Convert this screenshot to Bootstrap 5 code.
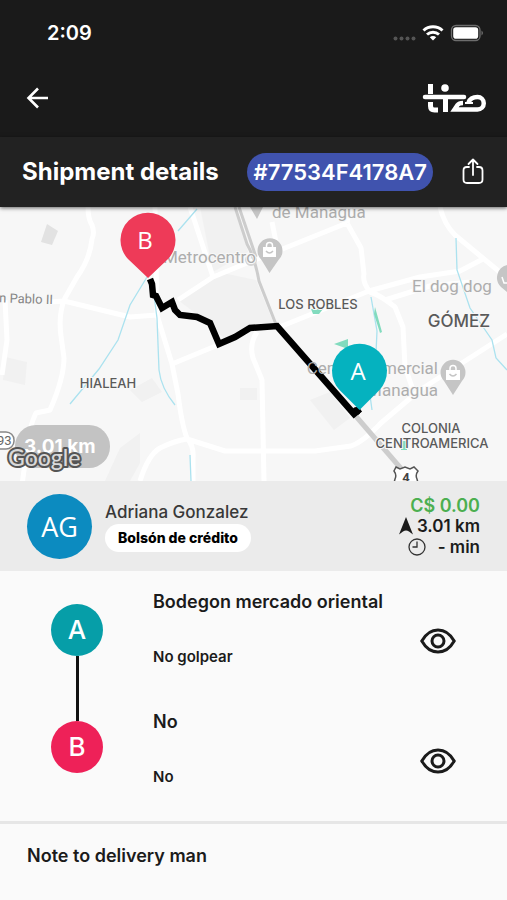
<!DOCTYPE html>
<html lang="en">
<head>
<meta charset="utf-8">
<meta name="viewport" content="width=device-width, initial-scale=1">
<title>Shipment details</title>
<link href="https://cdn.jsdelivr.net/npm/bootstrap@5.3.0/dist/css/bootstrap.min.css" rel="stylesheet">
<style>
body{font-family:Inter,"Liberation Sans",sans-serif;background:#fafafa;color:#1b1b1b}
svg{display:block}
.top-area{background:#1a1a1a;color:#fff;padding:0 20px 0 26px}
.status-row{height:66px;padding:0 3px 0 21px}
.clock{font-size:20px;line-height:24px}
.nav-row{height:71px;padding-bottom:7px}
.title-row{background:#222;color:#fff;height:70px;padding:0 20px 0 22px;position:relative;z-index:1;box-shadow:0 1px 4px rgba(0,0,0,.6)}
.title-row h1{font-size:24px;line-height:28px}
.code-pill{background:#4053ae;font-size:22px;line-height:24px;padding:7px 6px;margin-right:26px}
.map-area svg{width:100%;height:274px}
.map-area{background:#f7f7f7}
.client{background:#ebebeb;height:90px;padding:0 27px}
.client-text{margin-left:13px}
.avatar{width:65px;height:65px;background:#0c8bc0;color:#fff;font:400 27px/65px "Open Sans",sans-serif}
.client-name{font-size:17px;line-height:24px;color:#383838}
.credit{font-size:14px;line-height:16px;padding:6px 13px;color:#000;font-weight:800}
.figures{font-size:17px;line-height:21px}
.money{color:#4caf50;font-size:18px}
.stops{padding:19px 51px 32px}
.track{padding-top:14px;margin-right:50px}
.dot{width:52px;height:52px;font-size:26px;line-height:52px;color:#fff}
.dot-a{background:#069ea8}
.dot-b{background:#ee2158}
.link-line{width:3px;height:65px;background:#111}
.stop-row{padding-bottom:41px}
.stop-row:last-child{padding-bottom:0}
.stop-title{font-size:18px;line-height:24px}
.stop-sub{font-size:15px;line-height:24px;margin-top:31px}
.eye{padding-top:22px}
.note{border-top:3px solid #e6e6e6;padding:20px 27px}
</style>
<script src="https://cdn.jsdelivr.net/npm/bootstrap@5.3.0/dist/js/bootstrap.bundle.min.js"></script>
</head>
<body>
<header>
  <div class="top-area">
    <div class="status-row d-flex align-items-center justify-content-between">
      <span class="clock fw-semibold">2:09</span>
      <svg width="94" height="20" viewBox="390 23 94 20" aria-hidden="true">
        <g fill="#555"><circle cx="395.500" cy="38.500" r="2"/><circle cx="401.500" cy="38.500" r="2"/><circle cx="407.500" cy="38.500" r="2"/><circle cx="413.500" cy="38.500" r="2"/></g>
        <g fill="none" stroke="#fff" stroke-width="3"><path d="M423.500 30.500a14 14 0 0 1 19 0"/><path d="M427 34.500a9 9 0 0 1 12 0"/></g>
        <path d="M433 40.500l-3.200-3.300a4.600 4.600 0 0 1 6.400 0z" fill="#fff"/>
        <rect x="451.500" y="25.500" width="28.500" height="15" rx="4.500" fill="none" stroke="#6d6d6d" stroke-width="1.300"/>
        <rect x="453.200" y="27.200" width="25" height="11.500" rx="2.800" fill="#fff"/>
        <path d="M481.500 30.500q3 2.500 0 5z" fill="#6d6d6d"/>
      </svg>
    </div>
    <div class="nav-row d-flex align-items-center justify-content-between">
      <button type="button" class="btn p-0 border-0" aria-label="Back">
        <svg width="24" height="24" viewBox="0 0 24 24" fill="none" stroke="#fff" stroke-width="2.600"><path d="M22 12H3M12 2.500L2.500 12l9.500 9.500"/></svg>
      </button>
      <svg width="66" height="34" viewBox="422 81 66 34" role="img" aria-label="tizo" fill="none" stroke="#fff" stroke-width="5">
        <path d="M431.500 84v10M431.500 102v4q0 4 4 4h3.500M446.500 96.500V112"/>
        <path d="M426 97h39" stroke-width="4.500" stroke-linecap="round"/>
        <path d="M464 103q-4 0-5.500 2l-3 4.500h23a6.250 6.250 0 0 0 0-12.500q-7 0-9 5.500" stroke-width="4.500"/>
        <path d="M466 103h8" stroke-width="2"/>
        <circle cx="446" cy="88" r="3.800" fill="#fff" stroke="none"/>
      </svg>
    </div>
  </div>
  <div class="title-row d-flex align-items-center">
    <h1 class="fw-bold mb-0 me-auto">Shipment details</h1>
    <span class="code-pill rounded-pill fw-semibold">#77534F4178A7</span>
    <button type="button" class="btn p-0 border-0" aria-label="Share">
      <svg width="28" height="28" viewBox="0 0 28 28" fill="none" stroke="#fff" stroke-width="1.800" stroke-linecap="round" stroke-linejoin="round"><path d="M10 9H8q-3.500 0-3.500 3.500v9Q4.500 25 8 25h12q3.500 0 3.500-3.500v-9Q23.500 9 20 9h-2M14 17V2M9.500 6L14 1.500 18.500 6"/></svg>
    </button>
  </div>
</header>
<main>
  <section class="map-area" aria-label="Map">
    <svg viewBox="0 207 507 274" preserveAspectRatio="xMidYMid slice" font-family="Roboto, sans-serif">
      <g fill="#f1f1f1"><path d="M178 300l40-28 38 8 18 44-50 14-25-22zM200 207l36 0 12 45-35 20zM5 357l22 5-2 23-22-5zM130 390l22-12 10 14-20 10zM120 448l20-15v30l-10 18h-25zM240 388h17v12h-17zM310 400l20-8 20 26-16 12z"/></g>
      <path d="M47 224l11 7-6 14-11-3z" fill="#e2e2e2"/>
      <g fill="none" stroke="#fff" stroke-width="5" stroke-linejoin="round">
        <path d="M88 207q0 12 4 18 3 8 0 14-2 20-15 38l-12 21q-7 16-4 38l3 22q0 20-14 52l-14 3q-6 12-8 28l-6 44M50 302l14-1 66 16 27-2M155 207l2 108 15 49 6 30q4 32 9 44 7 8 6 20v23M140 481q8-26 20-33 14-7 27-9l38 12h90l36-5q12-4 30-23l39-33 87-56M172 364l46-19M178 300l35-23 34-14 38-15 62-25M190 207l23 70M347 223l14 25 3 26q-2 8 6 18 10 3 25 15l8 20 2 40 8 23M277 328l92-37 51-14 40-6 23-12M385 300l45-14 40-4M440 207q4 17 15 28l52 43M5 300l2 40-5 35M257 332q-8 12-4 26l9 22 2 101M350 207l-3 16M272 222l4 20"/>
      </g>
      <g fill="none" stroke="#abe2ef" stroke-width="1.300"><path d="M197 209l-19 22M147 277l-17 28-12 35-19 29-29 35M153 288l4 30 2 52q2 18 16 35M371 297l6 34-1 22-7 35 3 22M456 238l1 32 13 38 22 32 4 18 11 12M190 455l1 26"/></g>
      <g fill="#82dbbe"><path d="M311 309l12 0-4 5-6 0zM334 344l14-5v10zM375 307l7 25-2 1-6-19zM401 441h6v9h-6z"/></g>
      <g fill="none" stroke="#cdcdcd"><path d="M235 207l12 37q8 14 12 37l18 46M239 207l17 50" stroke-width="3"/><path d="M354 414l50 58" stroke-width="5"/></g>
      <circle cx="251" cy="260" r="5" fill="none" stroke="#d5d5d5" stroke-width="2"/>
      <g fill="#c5c5c5">
        <path d="M269.500 273l-8-13a12.500 12.500 0 1 1 17 0z"/>
        <path d="M453 395l-9-14a12.500 12.500 0 1 1 18 0zM257 219l-7-12h13zM507 265a13 13 0 0 0-6 22l6 5z"/>
      </g>
      <g fill="#fff"><path d="M263 247h13v10h-13zM446 370h14v10h-14z"/></g>
      <g fill="none" stroke="#fff" stroke-width="1.500"><path d="M266.500 247v-1.500a3 3 0 0 1 6 0v1.500M450 370v-1.500a3 3 0 0 1 6 0v1.500M502 277l2 6 3 0"/></g>
      <g fill="none" stroke="#c5c5c5" stroke-width="1.500"><path d="M266 251q3.500 4 7 0M449.500 374q3.500 4 7 0"/></g>
      <g fill="#adadad" stroke="#f8f8f8" stroke-width="2" paint-order="stroke">
        <text x="272" y="218" font-size="17">de Managua</text>
        <text x="163" y="263" font-size="17">Metrocentro</text>
        <text x="412" y="292" font-size="17">El dog dog</text>
        <text x="438" y="396" font-size="17" text-anchor="end">Managua</text>
      </g>
      <g fill="#5a5a5a" stroke="#f8f8f8" stroke-width="2" paint-order="stroke" font-family="Inter, sans-serif" text-anchor="middle" font-weight="500">
        <text x="318" y="309" font-size="13">LOS ROBLES</text>
        <text x="108" y="388" font-size="13">HIALEAH</text>
        <text x="459" y="327" font-size="17">GÓMEZ</text>
        <text x="431" y="433" font-size="13">COLONIA</text>
        <text x="432" y="448" font-size="13">CENTROAMERICA</text>
      </g>
      <text x="-8" y="303" font-size="13" fill="#858585" transform="rotate(2 20 300)">an Pablo II</text>
      <path d="M150 279l2 5 1 11 3 1 6 12 10-6 3 8 5 5 17 2 13 6 9 21 16-7 15-9 27-2 77 88 6-5" fill="none" stroke="#000" stroke-width="6.500"/>
      <circle cx="356.500" cy="411" r="4" fill="#000"/>
      <text x="438" y="374" font-size="17" fill="#adadad" text-anchor="end">Centro Comercial</text>
      <path d="M148 278l-20-19a27.500 27.500 0 1 1 40 0z" fill="#ee3a58"/>
      <path d="M359.500 410l-20-20a27.500 27.500 0 1 1 40 0z" fill="#05b2bf"/>
      <g fill="#fff" font-family="'Open Sans', sans-serif" font-size="24" text-anchor="middle"><text x="145" y="249">B</text><text x="358" y="380">A</text></g>
      <rect x="-16" y="432" width="30" height="17" rx="8" fill="#fff" stroke="#888" stroke-width="1.500"/>
      <text x="-3" y="445" font-size="13" fill="#666">93</text>
      <path d="M396 467l4 2 5-2 5 2 4-2 4 4q-3 4-1 8l1 4h-24l1-4q2-4-1-8z" fill="#fff" stroke="#555" stroke-width="1.500"/>
      <text x="406" y="482" font-size="13" font-weight="700" fill="#444" text-anchor="middle">4</text>
      <rect x="15" y="425" width="95" height="43" rx="21" fill="#bcbcbc" fill-opacity=".9"/>
      <text x="24" y="453" font-size="19" font-weight="700" font-family="Inter, sans-serif" fill="#fff">3.01 km</text>
      <text x="8" y="466" font-size="23" font-weight="500" font-family="Lato, sans-serif" fill="#d9d9d9" stroke="#555" stroke-width="4" stroke-linejoin="round" paint-order="stroke">Google</text>
    </svg>
  </section>
  <section class="client d-flex align-items-center">
    <div class="avatar rounded-circle text-center flex-shrink-0">AG</div>
    <div class="client-text me-auto">
      <div class="client-name fw-medium">Adriana Gonzalez</div>
      <div class="credit bg-white rounded-pill">Bolsón de crédito</div>
    </div>
    <div class="figures fw-semibold text-end">
      <div class="money">C$ 0.00</div>
      <div class="d-flex align-items-center justify-content-end gap-1"><svg width="14" height="18" viewBox="0 0 14 18" fill="#1b1b1b" aria-hidden="true"><path d="M7 0l7 17.500-4-3q-3-2-6 0l-4 3z"/></svg>3.01 km</div>
      <div class="d-flex align-items-center justify-content-end"><svg class="me-2" width="18" height="18" viewBox="0 0 18 18" fill="none" stroke="#333" stroke-width="1.300" aria-hidden="true"><circle cx="9" cy="9" r="8"/><path d="M9 3.500V9H4.500"/></svg><span class="ms-1">- min</span></div>
    </div>
  </section>
  <section class="stops d-flex">
    <div class="track d-flex flex-column align-items-center flex-shrink-0">
      <div class="dot dot-a rounded-circle text-center fw-medium">A</div>
      <div class="link-line"></div>
      <div class="dot dot-b rounded-circle text-center fw-medium">B</div>
    </div>
    <div class="flex-grow-1">
      <div class="stop-row d-flex align-items-center">
        <div class="me-auto"><div class="stop-title fw-semibold">Bodegon mercado oriental</div><div class="stop-sub fw-semibold">No golpear</div></div>
        <div class="eye"><button type="button" class="btn p-0 border-0" aria-label="View pickup"><svg width="36" height="26" viewBox="0 0 36 26" fill="none" stroke="#1b1b1b" stroke-width="3"><path d="M1.800 13Q8 2 18 2t16.200 11Q28 24 18 24T1.800 13z"/><circle cx="18" cy="13" r="6"/></svg></button></div>
      </div>
      <div class="stop-row d-flex align-items-center">
        <div class="me-auto"><div class="stop-title fw-semibold">No</div><div class="stop-sub fw-semibold">No</div></div>
        <div class="eye"><button type="button" class="btn p-0 border-0" aria-label="View drop-off"><svg width="36" height="26" viewBox="0 0 36 26" fill="none" stroke="#1b1b1b" stroke-width="3"><path d="M1.800 13Q8 2 18 2t16.200 11Q28 24 18 24T1.800 13z"/><circle cx="18" cy="13" r="6"/></svg></button></div>
      </div>
    </div>
  </section>
  <section class="note"><h2 class="stop-title fw-semibold mb-0">Note to delivery man</h2></section>
</main>
</body>
</html>
